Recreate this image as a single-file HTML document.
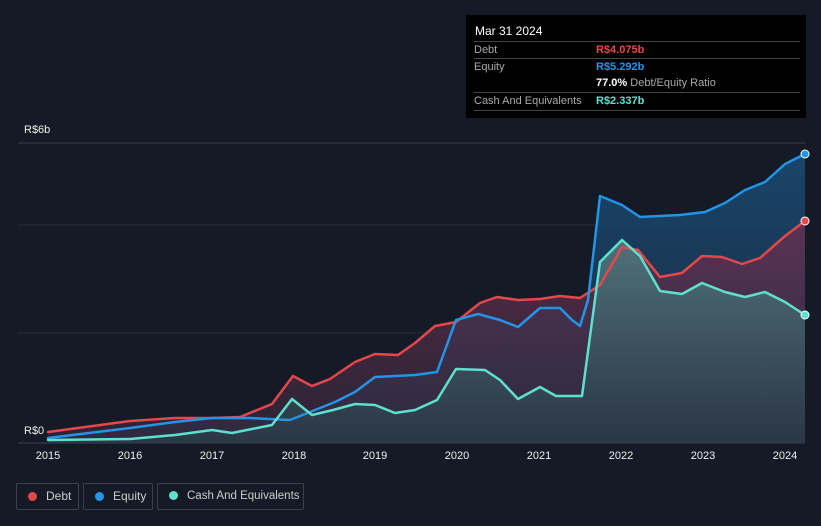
<!DOCTYPE html><html><head><style>
body{margin:0;background:#151b26;width:821px;height:526px;overflow:hidden;font-family:"Liberation Sans",sans-serif;position:relative}
.tt{position:absolute;left:466px;top:15px;width:340px;height:103px;background:#000;color:#fff;font-size:11px}
.row{position:absolute;left:8px;width:326px;border-top:1px solid #444;height:17px;line-height:17px;color:#aaa}
.leg{position:absolute;top:483px;height:27px;border:1px solid #3a404c;border-radius:2px;color:#ccc;font-size:12px;line-height:25px;box-sizing:border-box;white-space:nowrap}
.dot{display:inline-block;width:9px;height:9px;border-radius:50%;margin:0 9px 0 11px;vertical-align:-1px}
.yr{position:absolute;top:450px;color:#eee;font-size:11px;width:40px;text-align:center}
</style></head><body>
<svg width="821" height="526" style="position:absolute;left:0;top:0">
<defs>
<linearGradient id="ge" x1="0" y1="0" x2="0" y2="1"><stop offset="0" stop-color="#1a4a72" stop-opacity=".9"/><stop offset="1" stop-color="#1a3550" stop-opacity=".6"/></linearGradient>
<linearGradient id="gd" x1="0" y1="0" x2="0" y2="1"><stop offset="0" stop-color="#6a3050" stop-opacity=".8"/><stop offset="1" stop-color="#3a2a40" stop-opacity=".6"/></linearGradient>
<linearGradient id="gc" x1="0" y1="0" x2="0" y2="1"><stop offset="0" stop-color="#4f7a80" stop-opacity=".9"/><stop offset="1" stop-color="#2b3d48" stop-opacity=".7"/></linearGradient>
</defs>
<line x1="18" y1="143" x2="805" y2="143" stroke="#3a404c"/>
<line x1="18" y1="225" x2="805" y2="225" stroke="#262c38"/>
<line x1="18" y1="333" x2="805" y2="333" stroke="#262c38"/>
<line x1="18" y1="443" x2="805" y2="443" stroke="#3a404c"/>
<polygon fill="url(#ge)" points="48,443 48,438 130,428 175,422 212,418 250,418 290,420 310,412 335,402 355,392 375,377 415,375 437,372 456,320 478,314 500,320 518,327 540,308 560,308 572,320 580,326 588,300 600,196 622,205 640,217 680,215 705,212 725,203 745,190 765,182 785,164 805,154 805,443"/>
<polygon fill="url(#gd)" points="48,443 48,432 130,421 175,418 212,418 240,417 272,404 293,376 312,386 330,379 355,362 375,354 398,355 415,343 435,326 456,322 480,303 497,297 518,300 540,299 560,296 580,298 600,285 622,247 638,250 660,277 682,273 702,256 722,257 742,264 760,258 785,236 805,221 805,443"/>
<polygon fill="url(#gc)" points="48,443 48,440 130,439 175,435 212,430 232,433 272,425 292,399 312,415 333,410 355,404 375,405 395,413 415,410 437,400 456,369 485,370 500,380 518,399 540,387 556,396 582,396 600,262 622,240 640,256 660,291 682,294 702,283 725,292 745,297 765,292 785,302 805,315 805,443"/>
<g fill="none" stroke-width="2.5" stroke-linejoin="round" stroke-linecap="round">
<polyline stroke="#e5474a" points="48,432 130,421 175,418 212,418 240,417 272,404 293,376 312,386 330,379 355,362 375,354 398,355 415,343 435,326 456,322 480,303 497,297 518,300 540,299 560,296 580,298 600,285 622,247 638,250 660,277 682,273 702,256 722,257 742,264 760,258 785,236 805,221"/>
<polyline stroke="#2394e6" points="48,438 130,428 175,422 212,418 250,418 290,420 310,412 335,402 355,392 375,377 415,375 437,372 456,320 478,314 500,320 518,327 540,308 560,308 572,320 580,326 588,300 600,196 622,205 640,217 680,215 705,212 725,203 745,190 765,182 785,164 805,154"/>
<polyline stroke="#5ee0cf" points="48,440 130,439 175,435 212,430 232,433 272,425 292,399 312,415 333,410 355,404 375,405 395,413 415,410 437,400 456,369 485,370 500,380 518,399 540,387 556,396 582,396 600,262 622,240 640,256 660,291 682,294 702,283 725,292 745,297 765,292 785,302 805,315"/>
</g>
<circle cx="805" cy="154" r="4" fill="#2394e6" stroke="#fff" stroke-width="1"/>
<circle cx="805" cy="221" r="4" fill="#e5474a" stroke="#fff" stroke-width="1"/>
<circle cx="805" cy="315" r="4" fill="#5ee0cf" stroke="#fff" stroke-width="1"/>
</svg>
<div style="position:absolute;left:24px;top:124px;color:#eee;font-size:11px">R$6b</div>
<div style="position:absolute;left:24px;top:425px;color:#eee;font-size:11px">R$0</div>
<div class="yr" style="left:28px">2015</div><div class="yr" style="left:110px">2016</div><div class="yr" style="left:192px">2017</div><div class="yr" style="left:274px">2018</div><div class="yr" style="left:355px">2019</div><div class="yr" style="left:437px">2020</div><div class="yr" style="left:519px">2021</div><div class="yr" style="left:601px">2022</div><div class="yr" style="left:683px">2023</div><div class="yr" style="left:765px">2024</div>
<div class="tt">
<div style="position:absolute;left:9px;top:9px;font-size:12px">Mar 31 2024</div>
<div class="row" style="top:26px">Debt<span style="position:absolute;left:122px;color:#e5474a;font-weight:bold">R$4.075b</span></div>
<div class="row" style="top:43px">Equity<span style="position:absolute;left:122px;color:#2394e6;font-weight:bold">R$5.292b</span></div>
<div class="row" style="top:60px;border-top:none"><span style="position:absolute;left:122px;color:#fff"><b>77.0%</b> <span style="color:#aaa">Debt/Equity Ratio</span></span></div>
<div class="row" style="top:77px">Cash And Equivalents<span style="position:absolute;left:122px;color:#5ee0cf;font-weight:bold">R$2.337b</span></div>
<div class="row" style="top:95px;height:0"></div>
</div>
<div class="leg" style="left:16px;width:63px"><span class="dot" style="background:#e5474a"></span>Debt</div>
<div class="leg" style="left:83px;width:70px"><span class="dot" style="background:#2394e6"></span>Equity</div>
<div class="leg" style="left:157px;width:147px;font-size:11.5px"><span class="dot" style="background:#5ee0cf"></span>Cash And Equivalents</div>
</body></html>
